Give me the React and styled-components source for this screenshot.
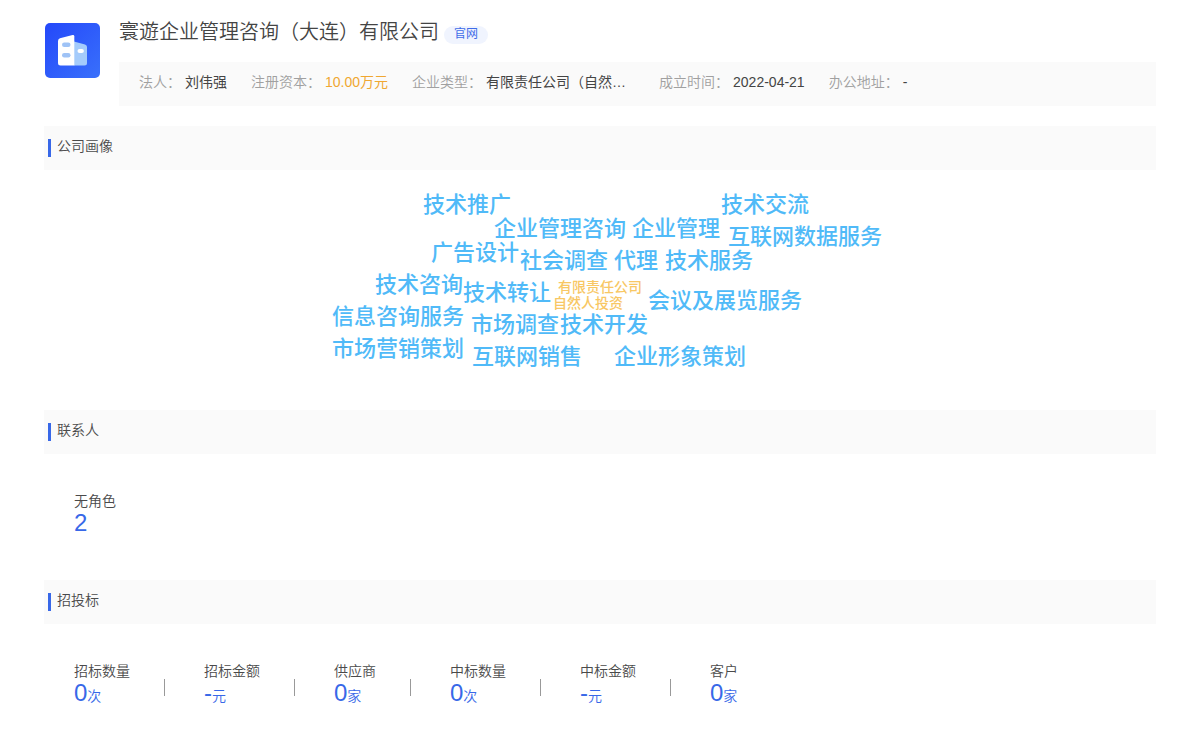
import React from "react";
import styled, { createGlobalStyle } from "styled-components";

const GlobalStyle = createGlobalStyle`
    body {
        margin: 0;
        background: #fff;
        color: #444;
        font-family: "Liberation Sans", "Noto Sans CJK SC", sans-serif;
        font-size: 14px;
        line-height: 20px;
    }
`

const Page = styled.main`
    padding: 20px 44px;
`

const Header = styled.header`
    display: flex;
    gap: 19px;
    margin-bottom: 20px;
`

const LogoBox = styled.div`
    flex: none;
    padding: 3px 0 0 1px;

    svg {
        display: block;
    }
`

const Company = styled.div`
    flex: 1;
    min-width: 0;
`

const TitleRow = styled.div`
    display: flex;
    gap: 5px;
    height: 42px;
`

const Title = styled.h1`
    margin: 0;
    font-size: 20px;
    font-weight: 350;
    line-height: 24px;
    color: #444;
`

const SiteLink = styled.a`
    height: 18px;
    margin-top: 6px;
    padding: 0 10px;
    border-radius: 9px;
    background: #f0f4fe;
    color: #3f6ce8;
    font-size: 12px;
    line-height: 16px;
    text-decoration: none;
`

const InfoBar = styled.dl`
    display: flex;
    flex-wrap: wrap;
    column-gap: 24px;
    margin: 0;
    padding: 10px 20px 14px;
    background: #fafafa;
`

const InfoItem = styled.div`
    display: flex;
    gap: 4px;
`

const InfoLabel = styled.dt`
    color: #a0a0a0;
    font-weight: 350;
`

const InfoValue = styled.dd`
    margin: 0;
    min-width: ${({ $wide }) => ($wide ? "149px" : "0")};
    white-space: nowrap;
    color: ${({ $highlight }) => ($highlight ? "#f0a731" : "#444")};
`

const SectionHead = styled.div`
    display: flex;
    align-items: center;
    gap: 6px;
    height: 44px;
    padding: 0 4px;
    background: #fafafa;

    &::before {
        content: "";
        width: 3px;
        height: 18px;
        background: #3868e8;
    }
`

const SectionTitle = styled.h2`
    margin: 0;
    padding-bottom: 4px;
    font-size: 14px;
    font-weight: 350;
    line-height: 20px;
    color: #4a4a4a;
`

const Cloud = styled.ul`
    position: relative;
    height: 240px;
    margin: 0;
    padding: 0;
    list-style: none;
`

const Word = styled.li`
    position: absolute;
    left: calc(50% + ${({ $x }) => $x}px);
    top: ${({ $y }) => $y}px;
    transform: translateY(-50%);
    white-space: nowrap;
    font-size: ${({ $small }) => ($small ? 14 : 22)}px;
    font-weight: 500;
    line-height: ${({ $small }) => ($small ? 16 : 26)}px;
    color: ${({ $small }) => ($small ? "#f8c764" : "#50baf8")};
`

const Stats = styled.dl`
    display: flex;
    margin: 0;
    padding: 37px 30px 45px;
`

const Stat = styled.div`
    display: flex;
    flex-direction: column;

    & + & {
        margin-left: 34px;
        padding-left: 40px;
        background: linear-gradient(#999, #999) 0 18px / 1px 17px no-repeat;
    }
`

const StatLabel = styled.dt`
    font-weight: 350;
    line-height: 20px;
    color: #4a4a4a;
`

const StatValue = styled.dd`
    margin: 0;
    font-size: 24px;
    line-height: 24px;
    color: #3868e8;
`

const Unit = styled.span`
    font-size: 14px;
    font-weight: 350;
`

const info = [
    { label: "法人", value: "刘伟强" },
    { label: "注册资本", value: "10.00万元", highlight: true },
    { label: "企业类型", value: "有限责任公司（自然…", wide: true },
    { label: "成立时间", value: "2022-04-21" },
    { label: "办公地址", value: "-" },
]

// x is measured from the middle of the cloud, y is the middle of the word
const words = [
    { text: "技术推广", x: -177, y: 35 },
    { text: "技术交流", x: 121, y: 35 },
    { text: "企业管理咨询", x: -106, y: 59 },
    { text: "企业管理", x: 32, y: 59 },
    { text: "互联网数据服务", x: 128, y: 67 },
    { text: "广告设计", x: -169, y: 83 },
    { text: "社会调查", x: -80, y: 91 },
    { text: "代理", x: 14, y: 91 },
    { text: "技术服务", x: 65, y: 91 },
    { text: "技术咨询", x: -225, y: 115 },
    { text: "技术转让", x: -137, y: 123 },
    { text: "有限责任公司", x: -42, y: 117, small: true },
    { text: "自然人投资", x: -47, y: 133, small: true },
    { text: "会议及展览服务", x: 48, y: 131 },
    { text: "信息咨询服务", x: -268, y: 147 },
    { text: "市场调查", x: -129, y: 155 },
    { text: "技术开发", x: -40, y: 155 },
    { text: "市场营销策划", x: -268, y: 179 },
    { text: "互联网销售", x: -128, y: 187 },
    { text: "企业形象策划", x: 14, y: 187 },
]

const contacts = [{ label: "无角色", value: "2" }]

const bids = [
    { label: "招标数量", value: "0", unit: "次" },
    { label: "招标金额", value: "-", unit: "元" },
    { label: "供应商", value: "0", unit: "家" },
    { label: "中标数量", value: "0", unit: "次" },
    { label: "中标金额", value: "-", unit: "元" },
    { label: "客户", value: "0", unit: "家" },
]

const Logo = () => (
    <svg width="55" height="55" viewBox="0 0 55 55" aria-hidden="true">
        <defs>
            <linearGradient id="logoBg" x1="0" y1="0" x2="1" y2="1">
                <stop offset="0" stopColor="#2448fa" />
                <stop offset="1" stopColor="#3970fb" />
            </linearGradient>
        </defs>
        <rect width="55" height="55" rx="5" fill="url(#logoBg)" />
        <path d="M29 18.5L40 21.4Q42 22 42 24V40Q42 42.5 39.5 42.5H29Z" fill="#a4cbfb" />
        <path d="M15 15.2L27.6 12Q29.3 11.7 29.3 13.2V42.5H15.5Q13 42.5 13 40V18Q13 15.8 15 15.2Z" fill="#fff" />
        <rect x="17" y="19.5" width="8.5" height="4.4" rx="2.2" fill="#9fc3f6" />
        <rect x="17" y="30" width="8.5" height="4.4" rx="2.2" fill="#9fc3f6" />
        <rect x="32.5" y="26" width="6.4" height="4" rx="2" fill="#fff" />
    </svg>
)

const Section = ({ title, children }) => (
    <section>
        <SectionHead>
            <SectionTitle>{title}</SectionTitle>
        </SectionHead>
        {children}
    </section>
)

const StatList = ({ items }) => (
    <Stats>
        {items.map(({ label, value, unit }) => (
            <Stat key={label}>
                <StatLabel>{label}</StatLabel>
                <StatValue>
                    {value}
                    {unit && <Unit>{unit}</Unit>}
                </StatValue>
            </Stat>
        ))}
    </Stats>
)

const App = () => {

    return (
        <>
            <GlobalStyle />
            <Page>
                <Header>
                    <LogoBox>
                        <Logo />
                    </LogoBox>
                    <Company>
                        <TitleRow>
                            <Title>寰遊企业管理咨询（大连）有限公司</Title>
                            <SiteLink href="#">官网</SiteLink>
                        </TitleRow>
                        <InfoBar>
                            {info.map(({ label, value, highlight, wide }) => (
                                <InfoItem key={label}>
                                    <InfoLabel>{label}：</InfoLabel>
                                    <InfoValue $highlight={highlight} $wide={wide}>{value}</InfoValue>
                                </InfoItem>
                            ))}
                        </InfoBar>
                    </Company>
                </Header>
                <Section title="公司画像">
                    <Cloud>
                        {words.map(({ text, x, y, small }) => (
                            <Word key={text} $x={x} $y={y} $small={small}>{text}</Word>
                        ))}
                    </Cloud>
                </Section>
                <Section title="联系人">
                    <StatList items={contacts} />
                </Section>
                <Section title="招投标">
                    <StatList items={bids} />
                </Section>
            </Page>
        </>
    )
}

export default App;
